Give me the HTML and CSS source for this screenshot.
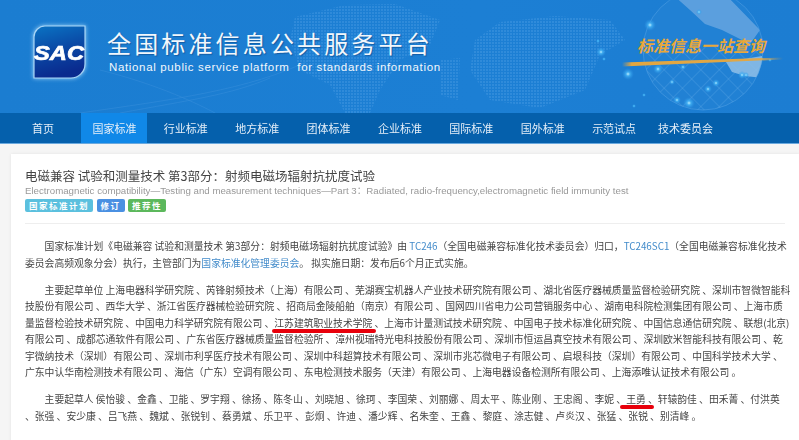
FILE: index.html
```html
<!DOCTYPE html>
<html lang="zh-CN">
<head>
<meta charset="utf-8">
<title>全国标准信息公共服务平台</title>
<link rel="stylesheet" href="styles.css">
</head>
<body>
<header class="banner">
  <svg class="banner-art" width="799" height="113" viewBox="0 0 799 113" aria-hidden="true">
    <defs>
      <pattern id="dots" width="3" height="3" patternUnits="userSpaceOnUse">
        <rect width="2" height="2" fill="#4e9fe6"/>
      </pattern>
      <radialGradient id="glow" cx="50%" cy="50%" r="50%">
        <stop offset="0" stop-color="#bff0ff"/>
        <stop offset=".35" stop-color="#45b4f5" stop-opacity=".8"/>
        <stop offset="1" stop-color="#2b94e6" stop-opacity="0"/>
      </radialGradient>
      <pattern id="net" width="13" height="13" patternUnits="userSpaceOnUse" patternTransform="rotate(45 703 50)">
        <path d="M0 0H13M0 0V13" stroke="#6fb4ea" stroke-width=".5" fill="none"/>
      </pattern>
      <clipPath id="globe"><circle cx="703" cy="50" r="60"/></clipPath>
      <linearGradient id="stripe" x1="0" x2="1" y1="0" y2="0">
        <stop offset="0" stop-color="#e3a63f" stop-opacity="0"/>
        <stop offset=".06" stop-color="#e3a63f"/>
        <stop offset=".85" stop-color="#dfa748"/>
        <stop offset="1" stop-color="#dfa748" stop-opacity="0"/>
      </linearGradient>
      <linearGradient id="logoFill" x1="0" x2=".25" y1="0" y2="1">
        <stop offset="0" stop-color="#0a74c4"/>
        <stop offset=".5" stop-color="#0a4aa6"/>
        <stop offset="1" stop-color="#0a2a8e"/>
      </linearGradient>
    </defs>
    <g fill="none" stroke="#3a8fdb" stroke-width=".7" opacity=".7">
      <path d="M80 113C170 100 250 90 310 60"/>
      <path d="M120 113C190 100 230 95 270 78"/>
      <path d="M100 70C160 85 200 105 215 113"/>
    </g>
    <g fill="url(#dots)" opacity=".38">
      <path d="M295 17L345 5L395 4L440 20L430 45L400 60L380 90L370 113L345 113L330 85L300 70L290 40Z"/>
      <path d="M475 40L500 22L555 16L610 20L625 40L600 55L585 90L540 108L490 100L470 70Z"/>
      <path d="M440 60L460 58L458 100L440 95Z"/>
    </g>
    <circle cx="703" cy="50" r="60" fill="#2a86d8" opacity=".4"/>
    <g clip-path="url(#globe)">
      <rect x="640" y="45" width="130" height="70" fill="url(#net)"/>
      <path d="M672 -6L725 -6L760 30L750 44L722 30L705 24L690 10Z" fill="#75ade2" opacity=".7"/>
      <path d="M726 62L762 56L764 78L745 76L732 72Z" fill="#8fbfe8" opacity=".85"/>
    </g>
    <circle cx="703" cy="50" r="60" fill="none" stroke="#58a5e6" stroke-width=".8" opacity=".6"/>
    <g fill="url(#glow)">
      <circle cx="650" cy="25" r="6"/><circle cx="601" cy="52" r="5"/><circle cx="628" cy="74" r="6"/>
      <circle cx="658" cy="69" r="5"/><circle cx="689" cy="103" r="6"/><circle cx="716" cy="83" r="4"/>
      <circle cx="677" cy="100" r="4"/><circle cx="708" cy="89" r="4"/><circle cx="742" cy="75" r="4"/>
      <circle cx="672" cy="82" r="3"/><circle cx="683" cy="67" r="3"/><circle cx="699" cy="12" r="3"/>
      <circle cx="746" cy="75" r="3"/><circle cx="770" cy="60" r="2"/><circle cx="598" cy="41" r="2"/>
      <circle cx="604" cy="59" r="2"/><circle cx="634" cy="106" r="2"/><circle cx="644" cy="95" r="2"/>
    </g>
    <path d="M622 62.5L783 57.5L783 59.5L622 66.5Z" fill="url(#stripe)"/>
  </svg>
  <svg class="logo" width="54" height="54" viewBox="0 0 54 54" aria-hidden="true">
    <path d="M12 1H52V39A14 14 0 0 1 38 53H1V12A11 11 0 0 1 12 1Z" fill="url(#logoFill)" stroke="#a8d5f5" stroke-width="1.2"/>
    <text x="1" y="35" textLength="50" lengthAdjust="spacingAndGlyphs" class="logo-text">SAC</text>
  </svg>
  <div class="site-name">
    <div class="site-name-zh">全国标准信息公共服务平台</div>
    <div class="site-name-en">National public service platform&nbsp; for standards information</div>
  </div>
  <div class="slogan">标准信息一站查询</div>
</header>

<nav class="main-nav">
  <a class="nav-item">首页</a>
  <a class="nav-item nav-item-active">国家标准</a>
  <a class="nav-item">行业标准</a>
  <a class="nav-item">地方标准</a>
  <a class="nav-item">团体标准</a>
  <a class="nav-item">企业标准</a>
  <a class="nav-item">国际标准</a>
  <a class="nav-item">国外标准</a>
  <a class="nav-item">示范试点</a>
  <a class="nav-item">技术委员会</a>
</nav>

<main class="card">
  <h1 class="title">电磁兼容 试验和测量技术 第3部分：射频电磁场辐射抗扰度试验</h1>
  <p class="title-en">Electromagnetic compatibility—Testing and measurement techniques—Part 3：Radiated, radio-frequency,electromagnetic field immunity test</p>
  <div class="tags">
    <span class="tag tag-plan">国家标准计划</span>
    <span class="tag tag-revise">修订</span>
    <span class="tag tag-rec">推荐性</span>
  </div>
  <hr class="rule">
  <p class="para">　　国家标准计划《电磁兼容 试验和测量技术 第3部分：射频电磁场辐射抗扰度试验》由 <a class="link">TC246</a>（全国电磁兼容标准化技术委员会）归口，<a class="link">TC246SC1</a>（全国电磁兼容标准化技术<br>委员会高频观象分会）执行，主管部门为<a class="link">国家标准化管理委员会</a>。 拟实施日期：发布后6个月正式实施。</p>
  <p class="para">　　主要起草单位 上海电器科学研究院 、芮锋射频技术（上海）有限公司 、芜湖赛宝机器人产业技术研究院有限公司 、湖北省医疗器械质量监督检验研究院 、深圳市智微智能科<br>技股份有限公司 、西华大学 、浙江省医疗器械检验研究院 、招商局金陵船舶（南京）有限公司 、国网四川省电力公司营销服务中心 、湖南电科院检测集团有限公司 、上海市质<br>量监督检验技术研究院 、中国电力科学研究院有限公司 、<span class="mark">江苏建筑职业技术学院</span> 、上海市计量测试技术研究院 、中国电子技术标准化研究院 、中国信息通信研究院 、联想(北京)<br>有限公司 、成都芯通软件有限公司 、广东省医疗器械质量监督检验所 、漳州视瑞特光电科技股份有限公司 、深圳市恒运昌真空技术有限公司 、深圳欧米智能科技有限公司 、乾<br>宇微纳技术（深圳）有限公司 、深圳市利孚医疗技术有限公司 、深圳中科超算技术有限公司 、深圳市兆芯微电子有限公司 、启垠科技（深圳）有限公司 、中国科学技术大学 、<br>广东中认华南检测技术有限公司 、海信（广东）空调有限公司 、东电检测技术服务（天津）有限公司 、上海电器设备检测所有限公司 、上海添唯认证技术有限公司 。</p>
  <p class="para">　　主要起草人 侯怡骏 、金鑫 、卫能 、罗宇翔 、徐扬 、陈冬山 、刘晓旭 、徐珂 、李国荣 、刘丽娜 、周太平 、陈业刚 、王忠阁 、李妮 、<span class="mark mark-name">王勇</span> 、轩辕韵佳 、田禾菁 、付洪英<br>、张强 、安少康 、吕飞燕 、魏斌 、张锐钊 、蔡勇斌 、乐卫平 、彭炯 、许迪 、潘少辉 、名朱奎 、王鑫 、黎庭 、涂志健 、卢炎汉 、张猛 、张锐 、别清峰 。</p>
</main>
</body>
</html>
```
FILE: styles.css
```css
html, body {
  margin: 0;
  padding: 0;
}
body {
  width: 799px;
  height: 440px;
  overflow: hidden;
  background: #f5f5f5;
  font-family: "Liberation Sans", "Noto Sans CJK SC", sans-serif;
  color: #333;
}
.banner {
  position: relative;
  height: 113px;
  display: flex;
  align-items: flex-start;
  background: linear-gradient(90deg, #1b7dd1 0%, #1c7fd4 60%, #1c7dd2 100%);
  overflow: hidden;
}
.banner-art {
  position: absolute;
  left: 0;
  top: 0;
}
.logo {
  position: relative;
  flex: none;
  margin: 25px 0 0 33px;
  filter: drop-shadow(0 0 2px #9fd4f7);
}
.logo-text {
  font-family: "Liberation Sans", sans-serif;
  font-weight: 700;
  font-style: italic;
  font-size: 20px;
  fill: #fff;
  stroke: #fff;
  stroke-width: .7px;
}
.site-name {
  position: relative;
  margin: 28px 0 0 20px;
  color: #f2f7fc;
}
.site-name-zh {
  font-family: "Noto Sans CJK SC", sans-serif;
  font-size: 24px;
  line-height: 30px;
  letter-spacing: 3.15px;
  white-space: nowrap;
  text-shadow: 1px 1px 1px rgba(10, 60, 120, .5);
}
.site-name-en {
  margin-top: 2px;
  margin-left: 2px;
  font-size: 11.5px;
  line-height: 14px;
  letter-spacing: .65px;
  white-space: nowrap;
}
.slogan {
  position: absolute;
  left: 637px;
  top: 35px;
  font-family: "Noto Sans CJK SC", sans-serif;
  font-size: 16px;
  line-height: 20px;
  font-weight: 700;
  font-style: italic;
  color: #e9a83a;
  white-space: nowrap;
}
.main-nav {
  display: flex;
  gap: 5.4px;
  height: 30px;
  padding-left: 10px;
  background: #0560ac;
  border-bottom: 1px solid #6aa9de;
}
.nav-item {
  flex: none;
  width: 66px;
  font-family: "Noto Sans CJK SC", sans-serif;
  font-size: 11px;
  line-height: 30px;
  text-align: center;
  color: #e4eef8;
  filter: blur(.3px);
}
.nav-item-active {
  background: #1088e8;
}
.card {
  margin: 10px 0 0 11px;
  padding: 13px 14px 0;
  height: 276px;
  background: #fff;
  box-shadow: 0 0 3px rgba(0, 0, 0, .08);
  overflow: hidden;
}
.title {
  margin: 0;
  font-family: "Noto Sans CJK SC", sans-serif;
  font-weight: 400;
  font-size: 12.5px;
  line-height: 17px;
  color: #444;
  white-space: nowrap;
  filter: blur(.3px);
}
.title-en {
  margin: 0;
  font-size: 9.7px;
  line-height: 14px;
  color: #999;
  white-space: nowrap;
  filter: blur(.3px);
}
.tags {
  display: flex;
  gap: 3.5px;
  margin-top: 1px;
}
.tag {
  height: 13px;
  padding: 0 4px;
  border-radius: 2px;
  font-family: "Noto Sans CJK SC", sans-serif;
  font-size: 8.5px;
  font-weight: 700;
  line-height: 13px;
  letter-spacing: 1.5px;
  color: #fff;
  white-space: nowrap;
}
.tag-plan { background: #5bc0de; }
.tag-revise { background: #4a90e2; }
.tag-rec { background: #5cb85c; }
.rule {
  margin: 11px 0 14px;
  border: 0;
  border-top: 1px solid #eee;
}
.para {
  margin: 0 0 10.5px;
  font-family: "Noto Sans CJK SC", sans-serif;
  font-size: 9.8px;
  line-height: 16.5px;
  color: #444;
  white-space: nowrap;
  filter: blur(.3px);
}
.link {
  color: #428bca;
}
.mark {
  position: relative;
}
.mark::after {
  content: "";
  position: absolute;
  left: -2px;
  right: -4px;
  bottom: -3px;
  height: 4px;
  border-radius: 2px;
  background: #e8000b;
}
.mark-name::after {
  left: -6px;
  right: -8px;
}
```
